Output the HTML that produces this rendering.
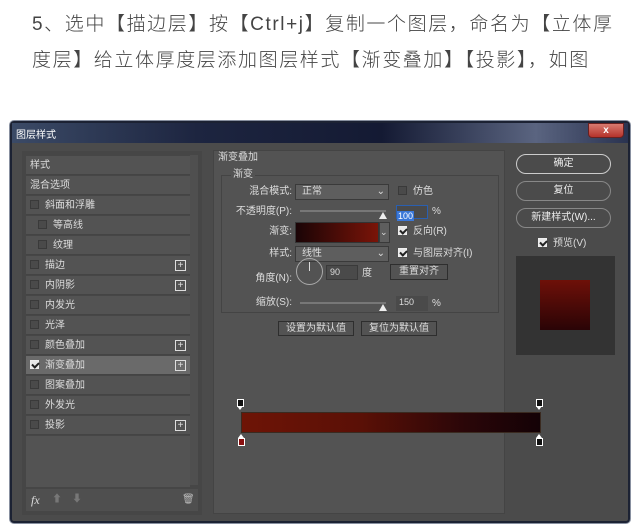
<!DOCTYPE html>
<html><head><meta charset="utf-8"><style>
*{box-sizing:border-box;margin:0;padding:0}
body{width:640px;height:532px;background:#fff;position:relative;overflow:hidden;font-family:"Liberation Sans","Noto Sans CJK SC",sans-serif}
.a{position:absolute}
.t{font-size:19px;color:#444;letter-spacing:1.6px;white-space:nowrap;left:32px;font-weight:300}
.dlg{left:10px;top:121px;width:620px;height:402px;background:#4b4b4b;border:2px solid #1c2233;border-radius:4px;box-shadow:0 0 0 1px #8890a0}
.title{left:0;top:0;width:616px;height:20px;background:linear-gradient(90deg,#3b4a66 0%,#1d2540 30%,#141a33 60%,#5a6480 85%,#2a3350 100%);color:#fff;font-size:10px;padding:3px 4px}
.close{right:4px;top:0;width:36px;height:15px;background:linear-gradient(#d87a70,#b5332b);border:1px solid #6a2020;border-radius:0 0 4px 4px;color:#fff;font-size:10px;text-align:center;line-height:13px;font-weight:bold}
.w{color:#ddd;font-size:10px;white-space:nowrap;line-height:12px}
.row{left:4px;width:164px;height:19px;background:#535353;border-bottom:1px solid #444;color:#ddd;font-size:10px;line-height:19px;padding-left:4px}
.cb{display:inline-block;width:9px;height:9px;border:1px solid #3a3a3a;background:#4a4a4a;vertical-align:-1px;margin-right:6px}
.cbon{background:#e8e8e8;border-color:#eee;position:relative}
.cbon:after{content:"";position:absolute;left:2px;top:0px;width:3px;height:5px;border:solid #222;border-width:0 2px 2px 0;transform:rotate(45deg)}
.plus{position:absolute;right:4px;top:4px;width:11px;height:11px;border:1px solid #ddd;color:#ddd;font-size:10px;line-height:9px;text-align:center}
.btn{background:#535353;border:1px solid #2e2e2e;color:#ddd;font-size:10px;text-align:center}
.rb{left:505px;width:95px;height:20px;border:1px solid #888;border-radius:10px;color:#eee;font-size:10px;text-align:center;line-height:18px;background:#4b4b4b}
.sel{background:#5e5e5e;border:1px solid #3a3a3a;color:#ddd;font-size:10px;padding-left:6px;line-height:14px;height:16px}
</style></head><body>
<div class="a t" style="top:9px">5、选中【描边层】按【Ctrl+j】复制一个图层，命名为【立体厚</div>
<div class="a t" style="top:45px">度层】给立体厚度层添加图层样式【渐变叠加】【投影】，如图</div>

<div class="a dlg">
 <div class="a title">图层样式</div>
 <div class="a close">x</div>
 <div class="a" style="left:10px;top:28px;width:180px;height:364px;background:#464646">
  <div class="a" style="left:168px;top:4px;width:8px;height:330px;background:#4f4f4f"></div>
  <div class="a row" style="top:5px">样式</div>
  <div class="a row" style="top:25px">混合选项</div>
  <div class="a row" style="top:45px"><span class="cb"></span>斜面和浮雕</div>
  <div class="a row" style="top:65px;padding-left:12px"><span class="cb"></span>等高线</div>
  <div class="a row" style="top:85px;padding-left:12px"><span class="cb"></span>纹理</div>
  <div class="a row" style="top:105px"><span class="cb"></span>描边<span class="plus">+</span></div>
  <div class="a row" style="top:125px"><span class="cb"></span>内阴影<span class="plus">+</span></div>
  <div class="a row" style="top:145px"><span class="cb"></span>内发光</div>
  <div class="a row" style="top:165px"><span class="cb"></span>光泽</div>
  <div class="a row" style="top:185px"><span class="cb"></span>颜色叠加<span class="plus">+</span></div>
  <div class="a row" style="top:205px;background:#6a6a6a"><span class="cb cbon"></span>渐变叠加<span class="plus">+</span></div>
  <div class="a row" style="top:225px"><span class="cb"></span>图案叠加</div>
  <div class="a row" style="top:245px"><span class="cb"></span>外发光</div>
  <div class="a row" style="top:265px"><span class="cb"></span>投影<span class="plus">+</span></div>
  <div class="a row" style="top:285px;height:51px;border:none"></div>
  <div class="a" style="left:4px;top:338px;width:172px;height:22px;background:#4f4f4f"></div>
  <div class="a w" style="left:9px;top:343px;font-style:italic;font-family:'Liberation Serif',serif;font-size:12px">fx</div>
  <div class="a w" style="left:30px;top:343px;color:#777">⬆</div>
  <div class="a w" style="left:50px;top:343px;color:#777">⬇</div>
  <div class="a w" style="left:160px;top:343px;color:#bbb">🗑</div>
 </div>
 <div class="a" style="left:201px;top:27px;width:292px;height:364px;background:#535353;border:1px solid #444"></div>
 <div class="a w" style="left:206px;top:29px">渐变叠加</div>
 <div class="a" style="left:209px;top:52px;width:278px;height:138px;border:1px solid #444"></div>
 <div class="a w" style="left:219px;top:46px;background:#535353;padding:0 2px">渐变</div>
 <div class="a w" style="left:220px;top:63px;width:60px;text-align:right">混合模式:</div>
 <div class="a sel" style="left:283px;top:61px;width:94px">正常<span style="float:right;margin-right:3px">⌄</span></div>
 <div class="a w" style="left:386px;top:63px"><span class="cb"></span>仿色</div>
 <div class="a w" style="left:210px;top:83px;width:70px;text-align:right">不透明度(P):</div>
 <div class="a" style="left:288px;top:87px;width:86px;height:2px;background:#777"></div>
 <div class="a" style="left:367px;top:85px;width:0;height:0;border:4px solid transparent;border-bottom:7px solid #eee"></div>
 <div class="a" style="left:384px;top:82px;width:32px;height:14px;background:#4a4a4a;border:1px solid #2a5fb0"><span style="background:#3a77d8;color:#fff;font-size:9px;padding:0 1px">100</span></div>
 <div class="a w" style="left:420px;top:83px">%</div>
 <div class="a w" style="left:220px;top:103px;width:60px;text-align:right">渐变:</div>
 <div class="a" style="left:283px;top:99px;width:84px;height:21px;background:linear-gradient(90deg,#1a0406,#7a1408);border:1px solid #333"></div>
 <div class="a sel" style="left:367px;top:99px;width:11px;height:21px;padding:0;font-size:9px;line-height:18px">⌄</div>
 <div class="a w" style="left:386px;top:103px"><span class="cb cbon"></span>反向(R)</div>
 <div class="a w" style="left:220px;top:125px;width:60px;text-align:right">样式:</div>
 <div class="a sel" style="left:283px;top:123px;width:94px">线性<span style="float:right;margin-right:3px">⌄</span></div>
 <div class="a w" style="left:386px;top:125px"><span class="cb cbon"></span>与图层对齐(I)</div>
 <div class="a w" style="left:220px;top:150px;width:60px;text-align:right">角度(N):</div>
 <div class="a" style="left:284px;top:135px;width:27px;height:27px;border:1px solid #aaa;border-radius:50%"></div>
 <div class="a" style="left:297px;top:139px;width:1px;height:9px;background:#ddd"></div>
 <div class="a" style="left:314px;top:142px;width:32px;height:15px;background:#4a4a4a;border:1px solid #3a3a3a;color:#ddd;font-size:9px;padding:1px 3px">90</div>
 <div class="a w" style="left:350px;top:145px">度</div>
 <div class="a btn" style="left:378px;top:141px;width:58px;height:16px;line-height:14px">重置对齐</div>
 <div class="a w" style="left:220px;top:174px;width:60px;text-align:right">缩放(S):</div>
 <div class="a" style="left:288px;top:179px;width:86px;height:2px;background:#777"></div>
 <div class="a" style="left:367px;top:177px;width:0;height:0;border:4px solid transparent;border-bottom:7px solid #eee"></div>
 <div class="a" style="left:384px;top:173px;width:32px;height:15px;background:#4a4a4a;color:#ddd;font-size:9px;padding:1px 3px">150</div>
 <div class="a w" style="left:420px;top:175px">%</div>
 <div class="a btn" style="left:266px;top:198px;width:76px;height:15px;line-height:13px">设置为默认值</div>
 <div class="a btn" style="left:349px;top:198px;width:76px;height:15px;line-height:13px">复位为默认值</div>
 <div class="a" style="left:229px;top:289px;width:300px;height:21px;background:linear-gradient(90deg,#6e1406 0%,#5a1006 40%,#2a0608 75%,#140206 100%);border:1px solid #3a2a20"></div>
 <div class="a" style="left:225px;top:276px;width:7px;height:8px;background:#111;border:1px solid #fff"></div>
 <div class="a" style="left:225px;top:283px;border:3.5px solid transparent;border-top:4px solid #fff"></div>
 <div class="a" style="left:524px;top:276px;width:7px;height:8px;background:#111;border:1px solid #fff"></div>
 <div class="a" style="left:524px;top:283px;border:3.5px solid transparent;border-top:4px solid #fff"></div>
 <div class="a" style="left:226px;top:308px;border:3.5px solid transparent;border-bottom:4px solid #fff"></div>
 <div class="a" style="left:226px;top:315px;width:7px;height:8px;background:#8a1010;border:1px solid #fff"></div>
 <div class="a" style="left:524px;top:308px;border:3.5px solid transparent;border-bottom:4px solid #fff"></div>
 <div class="a" style="left:524px;top:315px;width:7px;height:8px;background:#111;border:1px solid #fff"></div>
 <div class="a rb" style="left:504px;top:31px;border-color:#ccc">确定</div>
 <div class="a rb" style="left:504px;top:58px">复位</div>
 <div class="a rb" style="left:504px;top:85px">新建样式(W)...</div>
 <div class="a w" style="left:526px;top:115px"><span class="cb cbon"></span>预览(V)</div>
 <div class="a" style="left:504px;top:133px;width:99px;height:99px;background:#333"></div>
 <div class="a" style="left:528px;top:157px;width:50px;height:50px;background:linear-gradient(#6e1008,#2a0406)"></div>
</div>
</body></html>
